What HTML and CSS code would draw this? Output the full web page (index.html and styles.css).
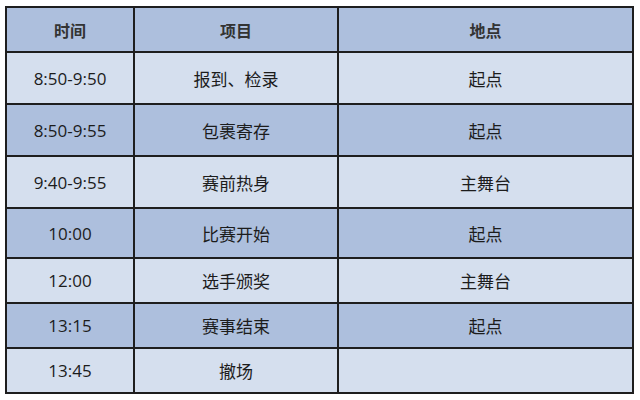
FILE: index.html
```html
<!DOCTYPE html>
<html lang="zh">
<head>
<meta charset="utf-8">
<link rel="stylesheet" href="styles.css">
</head>
<body>
<table class="schedule">
  <colgroup>
    <col class="c1"><col class="c2"><col class="c3">
  </colgroup>
  <thead>
    <tr class="head"><th>时间</th><th>项目</th><th>地点</th></tr>
  </thead>
  <tbody>
    <tr class="light tall"><td>8:50-9:50</td><td>报到、检录</td><td>起点</td></tr>
    <tr class="dark tall"><td>8:50-9:55</td><td>包裹寄存</td><td>起点</td></tr>
    <tr class="light tall"><td>9:40-9:55</td><td>赛前热身</td><td>主舞台</td></tr>
    <tr class="dark mid"><td>10:00</td><td>比赛开始</td><td>起点</td></tr>
    <tr class="light short"><td>12:00</td><td>选手颁奖</td><td>主舞台</td></tr>
    <tr class="dark short"><td>13:15</td><td>赛事结束</td><td>起点</td></tr>
    <tr class="light short"><td>13:45</td><td>撤场</td><td></td></tr>
  </tbody>
</table>
</body>
</html>
```
FILE: styles.css
```css
html, body {
  margin: 0;
  padding: 0;
  background: #ffffff;
}
body {
  padding: 6px 0 0 5px;
}
.schedule {
  border-collapse: collapse;
  width: 627px;
  table-layout: fixed;
  font-family: "Open Sans", "Noto Sans CJK SC", sans-serif;
  font-size: 17px;
  color: #1c1c1c;
}
.c1 { width: 128px; }
.c2 { width: 204px; }
.c3 { width: 295px; }
.schedule th, .schedule td {
  border: 2px solid #1e1e1e;
  text-align: center;
  vertical-align: middle;
  padding: 0;
}
.schedule th {
  font-family: "Noto Sans CJK SC", sans-serif;
  font-weight: 700;
  font-size: 16px;
  color: #333333;
  background: #adbfdd;
}
.schedule td {
  font-family: "Open Sans", "Noto Sans CJK SC", sans-serif;
}
.head { height: 45px; }
.tall { height: 52px; }
.mid { height: 50px; }
.short { height: 45px; }
.light td { background: #d5dfee; }
.dark td { background: #adbfdd; }
```
